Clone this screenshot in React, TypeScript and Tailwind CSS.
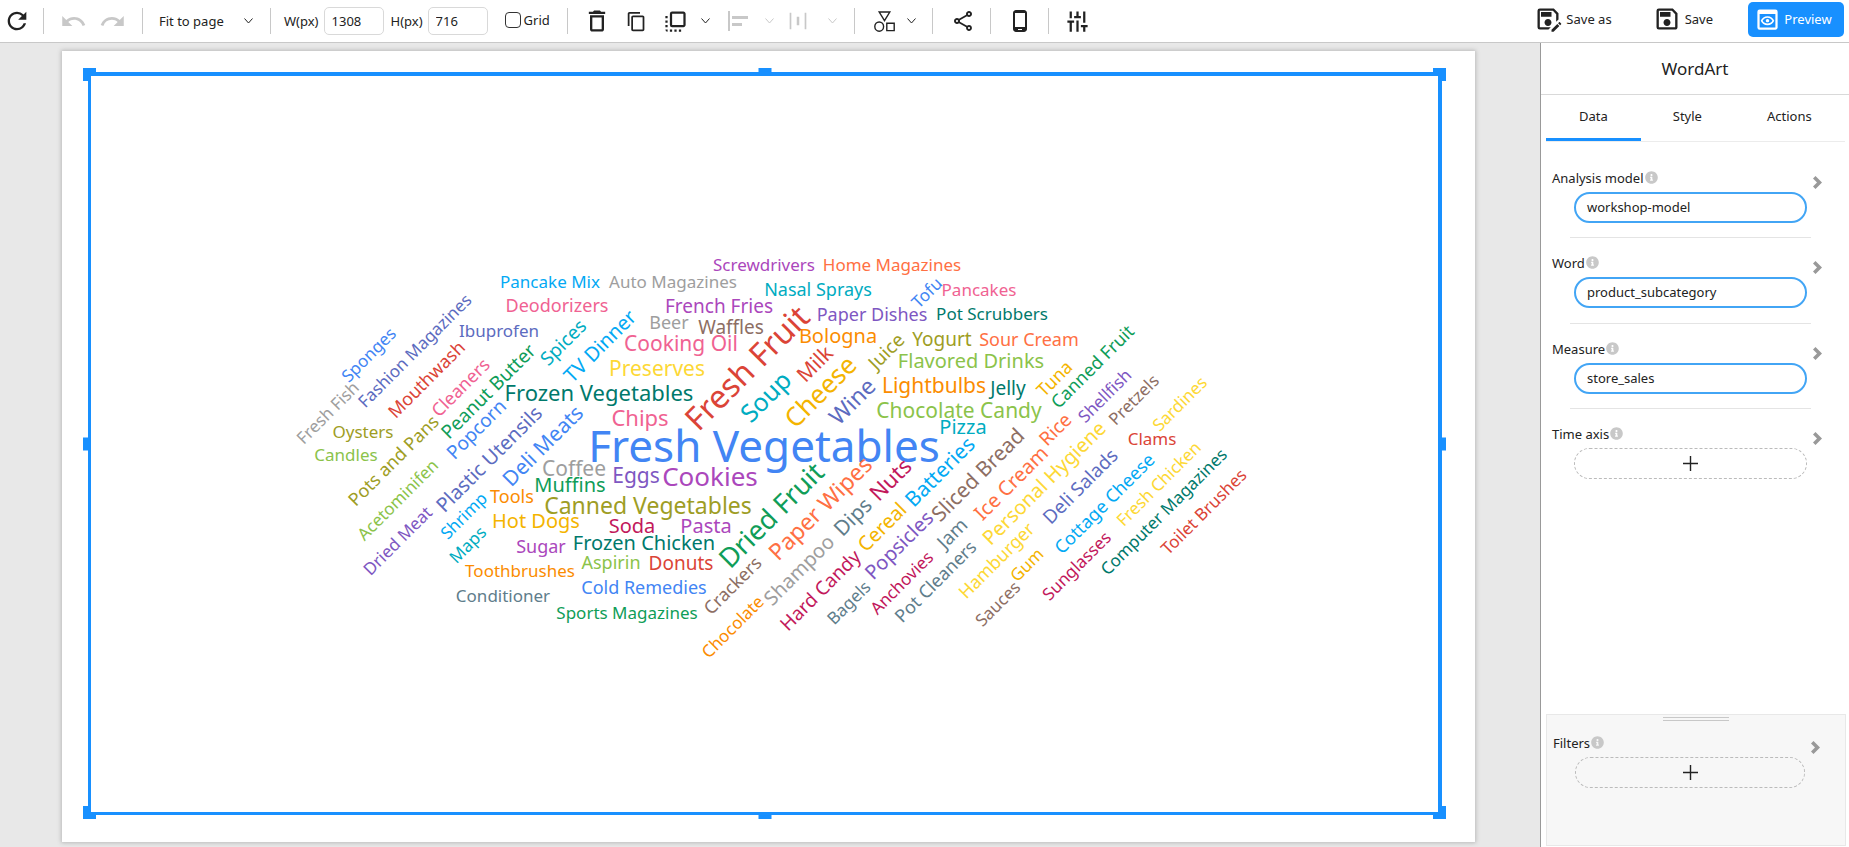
import React from "react";
import {
  MdAlignHorizontalLeft,
  MdContentCopy,
  MdDeleteOutline,
  MdFlipToFront,
  MdHorizontalDistribute,
  MdOutlinePhoneAndroid,
  MdOutlinePreview,
  MdOutlineSave,
  MdOutlineSaveAs,
  MdOutlineShare,
  MdRedo,
  MdRefresh,
  MdTune,
  MdUndo,
} from "react-icons/md";
import { FaInfoCircle } from "react-icons/fa";

const BLUE = "#4285F4";
const RED = "#DB4437";
const YELLOW = "#F4B400";
const GREEN = "#0F9D58";
const PURPLE = "#AB47BC";
const CYAN = "#00ACC1";
const CORAL = "#FF7043";
const OLIVE = "#9E9D24";
const INDIGO = "#5C6BC0";
const PINK = "#F06292";
const TEAL = "#00796B";
const CRIMSON = "#C2185B";
const VIOLET = "#7E57C2";
const SKY = "#03A9F4";
const LIME = "#8BC34A";
const ORANGE = "#FB8C00";
const SLATE = "#607D8B";
const GREY = "#9E9E9E";
const SUN = "#FDD835";
const BROWN = "#8D6E63";

// text, centre x, baseline y, font size, colour
type Word = [string, number, number, number, string];

const level: Word[] = [
  ["Screwdrivers", 764, 271, 17, PURPLE],
  ["Home Magazines", 892, 271, 17, CORAL],
  ["Pancake Mix", 550, 288, 17, SKY],
  ["Auto Magazines", 673, 288, 17, GREY],
  ["Nasal Sprays", 818, 296, 18, CYAN],
  ["Pancakes", 979, 296, 17, PINK],
  ["Deodorizers", 557, 312, 18, PINK],
  ["French Fries", 719, 313, 19, PURPLE],
  ["Beer", 669, 329, 18, GREY],
  ["Waffles", 731, 334, 19, BROWN],
  ["Paper Dishes", 872, 321, 18, VIOLET],
  ["Pot Scrubbers", 992, 320, 17, TEAL],
  ["Ibuprofen", 499, 337, 17, INDIGO],
  ["Cooking Oil", 681, 351, 21, PINK],
  ["Bologna", 838, 343, 20, ORANGE],
  ["Yogurt", 942, 346, 19, OLIVE],
  ["Sour Cream", 1029, 346, 18, CORAL],
  ["Preserves", 657, 376, 21, SUN],
  ["Flavored Drinks", 971, 368, 20, LIME],
  ["Lightbulbs", 934, 393, 21, ORANGE],
  ["Jelly", 1008, 395, 19, TEAL],
  ["Frozen Vegetables", 599, 401, 22, TEAL],
  ["Chocolate Candy", 959, 418, 21, LIME],
  ["Chips", 640, 426, 22, PINK],
  ["Pizza", 963, 434, 20, CYAN],
  ["Oysters", 363, 438, 17, OLIVE],
  ["Candles", 346, 461, 17, LIME],
  ["Fresh Vegetables", 764, 462, 44, BLUE],
  ["Coffee", 574, 476, 21, GREY],
  ["Muffins", 570, 492, 20, GREEN],
  ["Eggs", 636, 483, 21, VIOLET],
  ["Cookies", 710, 486, 26, PURPLE],
  ["Tools", 512, 503, 18, ORANGE],
  ["Canned Vegetables", 648, 514, 23, OLIVE],
  ["Hot Dogs", 536, 528, 20, YELLOW],
  ["Soda", 632, 533, 20, CRIMSON],
  ["Pasta", 706, 533, 20, PURPLE],
  ["Frozen Chicken", 644, 550, 20, TEAL],
  ["Sugar", 541, 553, 18, PURPLE],
  ["Aspirin", 611, 569, 18, LIME],
  ["Donuts", 681, 570, 19, RED],
  ["Toothbrushes", 520, 577, 17, ORANGE],
  ["Cold Remedies", 644, 594, 18, BLUE],
  ["Conditioner", 503, 602, 17, SLATE],
  ["Sports Magazines", 627, 619, 17, GREEN],
  ["Clams", 1152, 445, 17, RED],
];

const slanted: Word[] = [
  ["Sponges", 373, 359, 17, BLUE],
  ["Fresh Fish", 332, 417, 17, GREY],
  ["Fashion Magazines", 419, 355, 17, INDIGO],
  ["Mouthwash", 431, 384, 18, RED],
  ["Cleaners", 465, 392, 18, PINK],
  ["Peanut Butter", 493, 396, 19, GREEN],
  ["Popcorn", 481, 434, 19, BLUE],
  ["Spices", 568, 347, 19, CYAN],
  ["TV Dinner", 605, 351, 20, SKY],
  ["Plastic Utensils", 494, 464, 20, INDIGO],
  ["Deli Meats", 548, 451, 21, BLUE],
  ["Pots and Pans", 398, 465, 18, OLIVE],
  ["Acetominifen", 402, 504, 17, LIME],
  ["Dried Meat", 402, 545, 17, VIOLET],
  ["Shrimp", 468, 520, 17, SKY],
  ["Maps", 472, 549, 17, CYAN],
  ["Fresh Fruit", 755, 376, 32, RED],
  ["Soup", 772, 403, 25, CYAN],
  ["Milk", 820, 369, 21, RED],
  ["Cheese", 827, 398, 26, YELLOW],
  ["Juice", 891, 356, 19, OLIVE],
  ["Tofu", 931, 297, 17, BLUE],
  ["Wine", 858, 407, 23, INDIGO],
  ["Tuna", 1059, 383, 18, YELLOW],
  ["Canned Fruit", 1097, 371, 18, GREEN],
  ["Shellfish", 1109, 400, 17, VIOLET],
  ["Pretzels", 1138, 404, 17, BROWN],
  ["Sardines", 1184, 408, 17, SUN],
  ["Rice", 1060, 434, 19, CORAL],
  ["Batteries", 945, 477, 21, SKY],
  ["Sliced Bread", 983, 480, 21, BROWN],
  ["Ice Cream", 1016, 488, 20, CORAL],
  ["Personal Hygiene", 1049, 488, 20, SUN],
  ["Hamburger", 1001, 565, 18, SUN],
  ["Deli Salads", 1085, 491, 19, INDIGO],
  ["Cottage Cheese", 1109, 508, 18, SKY],
  ["Fresh Chicken", 1163, 488, 17, SUN],
  ["Computer Magazines", 1168, 516, 17, TEAL],
  ["Toilet Brushes", 1208, 516, 17, RED],
  ["Sunglasses", 1081, 570, 17, CRIMSON],
  ["Gum", 1031, 569, 17, YELLOW],
  ["Sauces", 1002, 608, 17, BROWN],
  ["Jam", 957, 538, 19, SLATE],
  ["Pot Cleaners", 940, 586, 18, SLATE],
  ["Anchovies", 906, 587, 17, CRIMSON],
  ["Bagels", 853, 607, 17, SLATE],
  ["Popsicles", 904, 550, 20, VIOLET],
  ["Cereal", 887, 532, 20, YELLOW],
  ["Hard Candy", 825, 595, 19, CRIMSON],
  ["Dips", 858, 522, 21, SLATE],
  ["Nuts", 896, 485, 22, CRIMSON],
  ["Paper Wipes", 826, 514, 23, CORAL],
  ["Dried Fruit", 778, 522, 27, GREEN],
  ["Crackers", 737, 590, 18, BROWN],
  ["Shampoo", 804, 575, 20, GREY],
  ["Chocolate", 737, 631, 17, ORANGE],
];

function WordCloud() {
  return (
    <svg viewBox="91 76 1347 736" className="block h-full w-full" role="img" aria-label="Word cloud of product subcategories by store sales">
      <g textAnchor="middle">
        {level.map(([text, x, y, size, fill]) => (
          <text key={text} x={x} y={y} fontSize={size} fill={fill}>
            {text}
          </text>
        ))}
        {slanted.map(([text, x, y, size, fill]) => (
          <text key={text} x={x} y={y} fontSize={size} fill={fill} transform={`rotate(-45 ${x} ${y})`}>
            {text}
          </text>
        ))}
      </g>
    </svg>
  );
}

function Sep() {
  return <span className="h-[26px] w-px shrink-0 bg-[#c8c8c8]" />;
}

function Down({ className = "" }: { className?: string }) {
  return (
    <svg viewBox="0 0 9 6" className={`h-1.5 w-[9px] shrink-0 ${className}`} fill="none" stroke="currentColor" strokeWidth="1">
      <path d="M.5.5l4 4.5 4-4.5" />
    </svg>
  );
}

function Shapes() {
  return (
    <svg viewBox="0 0 21 21" className="size-[21px]" fill="none" stroke="currentColor" strokeWidth="1.4">
      <path d="M5.2 1h10.6l-5.3 8.6z" />
      <ellipse cx="5.2" cy="15.6" rx="4.4" ry="4.6" />
      <path d="M12.8 12.2h7.4v7.4h-7.4z" />
    </svg>
  );
}

function Chevron() {
  return (
    <svg viewBox="0 0 9 13" className="h-[13px] w-[9px]" fill="#999">
      <path d="M2.5 0L9 6.5 2.5 13 0 10.6l4-4.1-4-4.1z" />
    </svg>
  );
}

function Plus() {
  return (
    <svg viewBox="0 0 15 15" className="size-[15px]" fill="none" stroke="#222" strokeWidth="1.4">
      <path d="M7.5 0v15M0 7.5h15" />
    </svg>
  );
}

function Field({ label, value }: { label: string; value?: string }) {
  return (
    <div>
      <div className="flex h-5 items-center justify-between pr-[27px] pl-[11px]">
        <span className="flex items-center gap-px">
          {label}
          <FaInfoCircle size={13} className="mb-0.5 text-[#c8c8c8]" />
        </span>
        <button type="button" aria-label={`${label} options`} className="mt-2">
          <Chevron />
        </button>
      </div>
      {value ? (
        <div className="mt-1 mr-[42px] ml-[33px]">
          <button type="button" aria-label={`${label}: ${value}`} className="flex h-[31px] w-full items-center rounded-full border-2 border-[#42a5f5] bg-white pb-px pl-[11px]">
            {value}
          </button>
        </div>
      ) : (
        <div className="mt-1 mr-[42px] ml-[33px]">
          <button type="button" aria-label={`Add ${label}`} className="flex h-[31px] w-full items-center justify-center rounded-full border border-dashed border-[#bbb]">
            <Plus />
          </button>
        </div>
      )}
    </div>
  );
}

function Toolbar() {
  return (
    <header className="flex h-[43px] shrink-0 items-center border-b border-[#c8c8c8] bg-white text-[#222]">
      <button type="button" aria-label="Refresh" className="mr-3 ml-[3px]">
        <MdRefresh size={28} />
      </button>
      <Sep />
      <div className="flex gap-3 px-4 text-[#c8c8c8]">
        <button type="button" aria-label="Undo">
          <MdUndo size={27} />
        </button>
        <button type="button" aria-label="Redo">
          <MdRedo size={27} />
        </button>
      </div>
      <Sep />
      <div className="grid w-[127px] items-center pl-4">
        <select aria-label="Zoom" className="col-start-1 row-start-1 appearance-none bg-transparent">
          <option>Fit to page</option>
        </select>
        <Down className="pointer-events-none col-start-1 row-start-1 mr-[17px] justify-self-end" />
      </div>
      <Sep />
      <label className="ml-[13px] flex items-center gap-[5px]">
        W(px)
        <input defaultValue="1308" className="h-7 w-[60px] rounded-[5px] border border-[#d9d9d9] px-[7px]" />
      </label>
      <label className="ml-[7px] flex items-center gap-[5px]">
        H(px)
        <input defaultValue="716" className="h-7 w-[60px] rounded-[5px] border border-[#d9d9d9] px-[7px]" />
      </label>
      <label className="mr-[17px] ml-[17px] flex items-center gap-[3px] pb-[3px]">
        <input type="checkbox" className="size-4 appearance-none rounded-[4px] border border-[#333]" />
        Grid
      </label>
      <Sep />
      <button type="button" aria-label="Delete" className="ml-[15px]">
        <MdDeleteOutline size={28} />
      </button>
      <button type="button" aria-label="Copy" className="ml-[15px]">
        <MdContentCopy size={21} />
      </button>
      <button type="button" aria-label="Bring to front" className="ml-[15px] flex items-center gap-3">
        <MdFlipToFront size={27} />
        <Down />
      </button>
      <button type="button" aria-label="Align" disabled className="ml-4 flex items-center gap-[15px] text-[#c8c8c8]">
        <MdAlignHorizontalLeft size={24} />
        <Down />
      </button>
      <button type="button" aria-label="Distribute" disabled className="mr-[17px] ml-[14px] flex items-center gap-5 text-[#c8c8c8]">
        <MdHorizontalDistribute size={20} />
        <Down />
      </button>
      <Sep />
      <button type="button" aria-label="Shapes" className="mr-4 ml-[19px] flex items-center gap-3">
        <Shapes />
        <Down />
      </button>
      <Sep />
      <button type="button" aria-label="Share" className="mr-[15px] ml-[18px]">
        <MdOutlineShare size={24} />
      </button>
      <Sep />
      <button type="button" aria-label="Mobile layout" className="mr-4 ml-[17px]">
        <MdOutlinePhoneAndroid size={24} />
      </button>
      <Sep />
      <button type="button" aria-label="Settings" className="ml-[15px]">
        <MdTune size={27} className="rotate-90" />
      </button>
      <div className="mr-[5px] mb-1 ml-auto flex items-center">
        <button type="button" className="flex items-center gap-1">
          <MdOutlineSaveAs size={28} />
          Save as
        </button>
        <button type="button" className="ml-[41px] flex items-center gap-1">
          <MdOutlineSave size={28} />
          Save
        </button>
        <button type="button" className="ml-[35px] flex h-[35px] w-24 items-center justify-center gap-[3px] rounded-[5px] bg-[#1890ff] pr-1.5 text-white">
          <MdOutlinePreview size={27} />
          Preview
        </button>
      </div>
    </header>
  );
}

const handles = [
  "-top-1 -left-[5px]",
  "-top-1 left-1/2 -translate-x-1/2",
  "-top-1 -right-1",
  "top-1/2 -left-[5px] -translate-y-1/2",
  "top-1/2 -right-1 -translate-y-1/2",
  "-bottom-1 -left-[5px]",
  "-bottom-1 left-1/2 -translate-x-1/2",
  "-bottom-1 -right-1",
];

export default function App() {
  return (
    <div className="flex h-screen flex-col overflow-hidden bg-white font-['Noto_Sans','Open_Sans',sans-serif] text-[13px] leading-5 text-[#222]">
      <Toolbar />
      <div className="flex min-h-0 flex-1">
        <main className="flex min-w-0 flex-1 bg-[#e8e8e8] pt-2 pr-[65px] pb-[5px] pl-[62px]">
          <section className="flex flex-1 bg-white pt-[21px] pr-[33px] pb-[27px] pl-[26px] shadow-[0_0_4px_1px_#bbb]">
            <div className="relative isolate flex flex-1">
              {handles.map((position) => (
                <span key={position} className={`absolute z-0 size-[13px] bg-[#1890ff] ${position}`} />
              ))}
              <div className="relative z-10 min-w-0 flex-1 border-t-4 border-r-4 border-b-[3px] border-l-[3px] border-[#1890ff] bg-white">
                <WordCloud />
              </div>
            </div>
          </section>
        </main>
        <aside className="flex w-[309px] shrink-0 flex-col border-l border-[#999] bg-white">
          <h2 className="h-[52px] border-b border-[#d9d9d9] pt-3 text-center text-[17px] leading-7">WordArt</h2>
          <div role="tablist" className="mr-1 ml-[5px] flex h-[47px] border-b border-[#ececec]">
            <button type="button" role="tab" aria-selected="true" className="border-b-[3px] border-[#1890ff] px-[33px] pb-0.5">
              Data
            </button>
            <button type="button" role="tab" aria-selected="false" className="px-8 pb-[5px]">
              Style
            </button>
            <button type="button" role="tab" aria-selected="false" className="px-[33px] pb-[5px]">
              Actions
            </button>
          </div>
          <div className="pt-[26px]">
            <Field label="Analysis model" value="workshop-model" />
            <hr className="mt-3.5 mr-[38px] mb-[15px] ml-[29px] border-[#e4e4e4]" />
            <Field label="Word" value="product_subcategory" />
            <hr className="mt-[15px] mr-[38px] mb-[15px] ml-[29px] border-[#e4e4e4]" />
            <Field label="Measure" value="store_sales" />
            <hr className="mt-3.5 mr-[38px] mb-[15px] ml-[29px] border-[#e4e4e4]" />
            <Field label="Time axis" />
          </div>
          <div className="mt-auto mr-[3px] mb-px ml-[5px] h-[132px] border border-[#e8e8e8] bg-[#f7f7f7]">
            <div className="mx-auto mt-0.5 mb-3 h-1 w-[66px] border-y border-[#c8c8c8]" />
            <div className="-mr-0.5 -ml-[5px]">
              <Field label="Filters" />
            </div>
          </div>
        </aside>
      </div>
    </div>
  );
}
